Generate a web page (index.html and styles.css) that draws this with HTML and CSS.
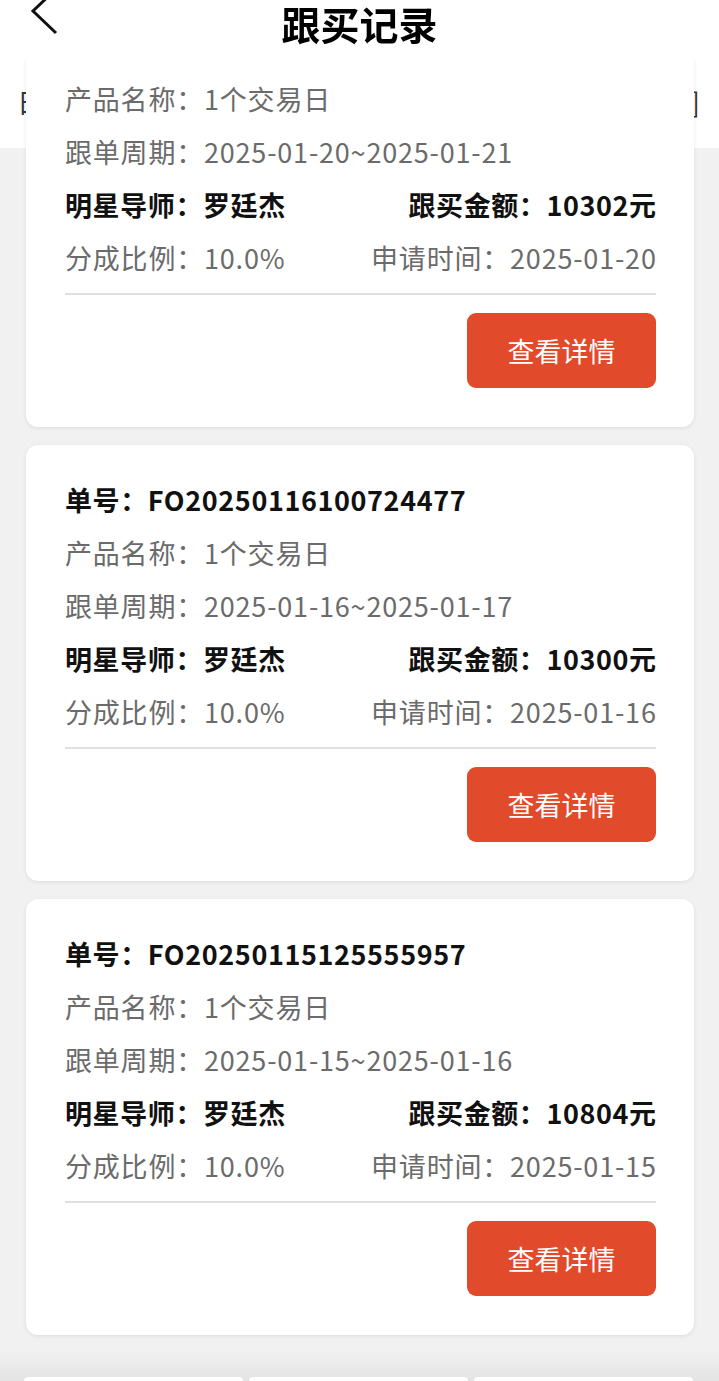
FILE: index.html
```html
<!DOCTYPE html>
<html lang="zh-CN">
<head>
<meta charset="utf-8">
<title>跟买记录</title>
<link rel="stylesheet" href="styles.css">
</head>
<body>
<header class="topbar">
  <svg class="back" width="40" height="44" viewBox="0 0 40 44"><polyline points="26,-11 3,11 26,33" fill="none" stroke="#111" stroke-width="3"/></svg>
  <h1 class="title">跟买记录</h1>
</header>
<div class="tabs">
  <span class="tab">日</span>
  <span class="tab">]</span>
</div>
<main class="list">
  <section class="card">
    <div class="row strong">单号：FO20250120093512368</div>
    <div class="row muted">产品名称：1个交易日</div>
    <div class="row muted">跟单周期：2025-01-20~2025-01-21</div>
    <div class="row split strong"><span>明星导师：罗廷杰</span><span>跟买金额：10302元</span></div>
    <div class="row split muted"><span>分成比例：10.0%</span><span>申请时间：2025-01-20</span></div>
    <div class="divider"></div>
    <div class="actions"><button class="btn">查看详情</button></div>
  </section>
  <section class="card">
    <div class="row strong">单号：FO20250116100724477</div>
    <div class="row muted">产品名称：1个交易日</div>
    <div class="row muted">跟单周期：2025-01-16~2025-01-17</div>
    <div class="row split strong"><span>明星导师：罗廷杰</span><span>跟买金额：10300元</span></div>
    <div class="row split muted"><span>分成比例：10.0%</span><span>申请时间：2025-01-16</span></div>
    <div class="divider"></div>
    <div class="actions"><button class="btn">查看详情</button></div>
  </section>
  <section class="card">
    <div class="row strong">单号：FO20250115125555957</div>
    <div class="row muted">产品名称：1个交易日</div>
    <div class="row muted">跟单周期：2025-01-15~2025-01-16</div>
    <div class="row split strong"><span>明星导师：罗廷杰</span><span>跟买金额：10804元</span></div>
    <div class="row split muted"><span>分成比例：10.0%</span><span>申请时间：2025-01-15</span></div>
    <div class="divider"></div>
    <div class="actions"><button class="btn">查看详情</button></div>
  </section>
</main>
<footer class="footer">
  <div class="tile"></div>
  <div class="tile"></div>
  <div class="tile"></div>
</footer>
</body>
</html>
```
FILE: styles.css
```css
html, body {
  margin: 0;
  padding: 0;
  overflow: hidden;
}
body {
  background: #f1f1f1;
  font-family: "Noto Sans CJK SC", "Noto Sans", sans-serif;
  color: #111;
}
.topbar {
  position: fixed;
  top: 0;
  left: 0;
  right: 0;
  height: 60px;
  background: #fff;
  z-index: 10;
}
.back {
  position: absolute;
  left: 30px;
  top: 0;
}
.title {
  margin: 0;
  padding-top: 1px;
  text-align: center;
  font-size: 39px;
  font-weight: 700;
  line-height: 44px;
  color: #000;
}
.tabs {
  height: 88px;
  padding: 60px 19px 0 17px;
  background: #fff;
  display: flex;
  justify-content: space-between;
  align-items: center;
  font-size: 27px;
  color: #333;
}
.tab {
  line-height: 1;
  margin-top: -6px;
}
.list {
  position: relative;
  z-index: 1;
  margin-top: -157px;
  padding: 0 25px 0 26px;
  display: flex;
  flex-direction: column;
  gap: 18px;
}
.card {
  background: #fff;
  border-radius: 12px;
  padding: 28px 38px 39px 39px;
  box-shadow: 0 1px 4px rgba(0, 0, 0, 0.09);
}
.row {
  font-size: 27px;
  line-height: 53px;
  height: 53px;
  white-space: nowrap;
}
.strong {
  font-weight: 700;
  color: #111;
  letter-spacing: 0.6px;
}
.muted {
  color: #6b6b6b;
  letter-spacing: 0.8px;
}
.split {
  display: flex;
  justify-content: space-between;
}
.split span:last-child {
  margin-right: -0.7px;
}
.divider {
  margin-top: 9px;
  border-top: 2px solid #e0e0e0;
}
.actions {
  margin-top: 18px;
  display: flex;
  justify-content: flex-end;
}
.btn {
  width: 189px;
  height: 75px;
  border: 0;
  border-radius: 9px;
  background: #e14a2b;
  color: #fff;
  font-family: "Noto Sans CJK SC", "Noto Sans", sans-serif;
  font-size: 27px;
  padding: 0;
}
.footer {
  margin-top: 15px;
  height: 31px;
  box-sizing: border-box;
  padding: 27px 26px 0 24px;
  background: linear-gradient(#f1f1f1, #e3e3e3);
  display: grid;
  grid-template-columns: repeat(3, 1fr);
  gap: 6px;
}
.tile {
  height: 4px;
  background: #fff;
  border-radius: 4px 4px 0 0;
}
```
